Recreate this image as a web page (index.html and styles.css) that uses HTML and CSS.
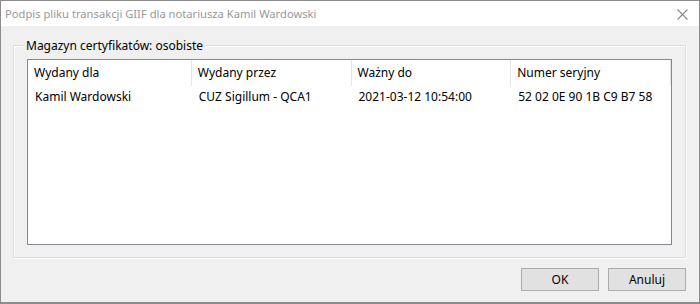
FILE: index.html
```html
<!DOCTYPE html>
<html lang="pl">
<head>
    <meta charset="UTF-8">
    <title>Podpis pliku transakcji GIIF</title>
    <link rel="stylesheet" href="styles.css">
</head>
<body>
    <div class="window">
        <div class="titlebar">
            <span class="title">Podpis pliku transakcji GIIF dla notariusza Kamil Wardowski</span>
            <span class="close">
                <svg width="11" height="11" viewBox="0 0 11 11"><path d="M0.5 0.5 L10.5 10.5 M10.5 0.5 L0.5 10.5" stroke="#8a8a8a" stroke-width="1.1" fill="none"/></svg>
            </span>
        </div>
        <div class="content">
            <div class="group">
                <div class="group-title">Magazyn certyfikatów: osobiste</div>
                <div class="listview">
                    <div class="lv-header">
                        <div class="col c1">Wydany dla</div>
                        <div class="col c2">Wydany przez</div>
                        <div class="col c3">Ważny do</div>
                        <div class="col c4">Numer seryjny</div>
                    </div>
                    <div class="lv-row">
                        <div class="col c1">Kamil Wardowski</div>
                        <div class="col c2">CUZ Sigillum - QCA1</div>
                        <div class="col c3">2021-03-12 10:54:00</div>
                        <div class="col c4">52 02 0E 90 1B C9 B7 58</div>
                    </div>
                </div>
            </div>
            <div class="buttons">
                <button class="button">OK</button>
                <button class="button">Anuluj</button>
            </div>
        </div>
    </div>
</body>
</html>
```

FILE: styles.css
```css
body {
    margin: 0;
    background: #f0f0f0;
    font-family: "Noto Sans", "Open Sans", sans-serif;
    font-size: 12px;
    color: #000;
}
.window {
    width: 700px;
    height: 304px;
    box-sizing: border-box;
    border: 1px solid #8c8c8c;
    border-bottom-width: 2px;
    background: #f0f0f0;
    display: flex;
    flex-direction: column;
}
.titlebar {
    height: 25px;
    background: #fff;
    display: flex;
    align-items: center;
    justify-content: space-between;
    padding: 0 11px 0 4px;
}
.title {
    color: #999;
    font-size: 11.2px;
}
.close {
    display: flex;
    margin-top: 1px;
}
.content {
    flex: 1;
    padding: 19px 13px 0 12px;
    display: flex;
    flex-direction: column;
}
.group {
    position: relative;
    height: 213px;
    box-sizing: border-box;
    border: 1px solid #dcdcdc;
    box-shadow: inset 1px 1px 0 #fff, 1px 1px 0 #fff;
    padding: 13px 13px 0 13px;
}
.group-title {
    position: absolute;
    top: -8px;
    left: 10px;
    padding: 0 2px;
    background: #f0f0f0;
    line-height: 16px;
}
.listview {
    height: 186px;
    box-sizing: border-box;
    border: 1px solid #828790;
    background: #fff;
}
.lv-header, .lv-row {
    display: flex;
}
.lv-header {
    height: 26px;
    align-items: center;
}
.lv-header .col {
    border-right: 1px solid #e5e5e5;
    height: 26px;
    line-height: 26px;
}
.lv-row {
    height: 20px;
    align-items: center;
}
.col {
    box-sizing: border-box;
    padding-left: 6px;
    white-space: nowrap;
    overflow: hidden;
}
.lv-row .col {
    padding-left: 7px;
}
.c1 { width: 164px; }
.c2 { width: 160px; }
.c3 { width: 160px; }
.c4 { width: 160px; }
.buttons {
    display: flex;
    justify-content: flex-end;
    gap: 9px;
    margin-top: 10px;
}
.button {
    width: 78px;
    height: 23px;
    border: 1px solid #adadad;
    background: #e1e1e1;
    font-family: inherit;
    font-size: 12px;
    color: #000;
    padding: 0;
}
```
